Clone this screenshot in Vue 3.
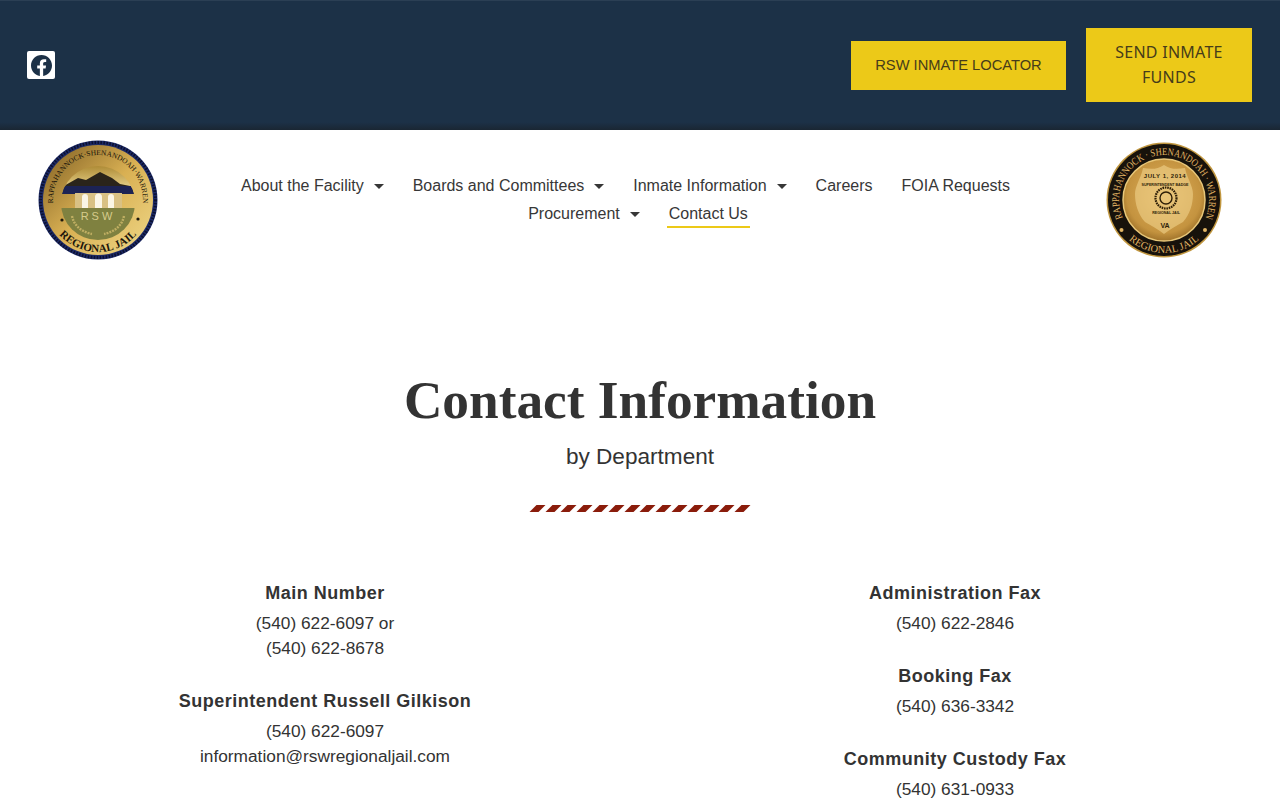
<template>
  <div class="page">
    <header class="topbar">
      <a class="fb" href="#" aria-label="Facebook">
        <svg viewBox="0 0 24 24" width="21" height="21">
          <path fill="#1c3147" d="M24 12.07C24 5.4 18.63 0 12 0S0 5.4 0 12.07c0 6.03 4.39 11.02 10.13 11.93v-8.44H7.08v-3.49h3.05V9.41c0-3.02 1.79-4.69 4.53-4.69 1.31 0 2.69.24 2.69.24v2.97h-1.51c-1.49 0-1.96.93-1.96 1.89v2.25h3.33l-.53 3.49h-2.8V24C19.61 23.09 24 18.1 24 12.07z"/>
        </svg>
      </a>
      <div class="top-buttons">
        <a class="btn btn-locator" href="#">RSW INMATE LOCATOR</a>
        <a class="btn btn-funds" href="#">SEND INMATE FUNDS</a>
      </div>
    </header>

    <div class="masthead">
      <div class="seal-left">
        <svg viewBox="0 0 120 120" width="120" height="120">
          <defs>
            <linearGradient id="goldA" x1="0" y1="0" x2="1" y2="1">
              <stop offset="0" stop-color="#7d5d22" />
              <stop offset="0.5" stop-color="#d9b053" />
              <stop offset="1" stop-color="#f0d98a" />
            </linearGradient>
            <linearGradient id="goldSky" x1="0" y1="0" x2="0" y2="1">
              <stop offset="0" stop-color="#a9852f" />
              <stop offset="1" stop-color="#f6e4a0" />
            </linearGradient>
            <path id="arcTopA" d="M60 105 A45 45 0 1 1 60.01 105" />
            <path id="arcBottomA" d="M60 8 A52 52 0 1 0 60.01 8" />
            <clipPath id="innerA"><circle cx="60" cy="63" r="37" /></clipPath>
          </defs>
          <circle cx="60" cy="60" r="59.5" fill="#1d2a66" />
          <circle cx="60" cy="60" r="57.5" fill="none" stroke="#0b1030" stroke-width="3" stroke-dasharray="1.5 1.5" />
          <circle cx="60" cy="60" r="55" fill="url(#goldA)" />
          <text class="seal-text" font-size="7.4" fill="#15110a"><textPath href="#arcTopA" startOffset="50%" text-anchor="middle">RAPPAHANNOCK·SHENANDOAH·WARREN</textPath></text>
          <text class="seal-text" font-size="11" font-weight="700" fill="#1d170c"><textPath href="#arcBottomA" startOffset="50%" text-anchor="middle">REGIONAL JAIL</textPath></text>
          <g clip-path="url(#innerA)">
            <rect x="20" y="24" width="80" height="30" fill="url(#goldSky)" />
            <path d="M24 47 L40 38 L48 40 L62 32 L74 38 L82 44 L92 46 L98 54 H24 Z" fill="#2a241a" />
            <rect x="24" y="46" width="72" height="8" fill="#1c2354" />
            <rect x="37" y="53" width="47" height="15" fill="#d9c184" />
            <path d="M44 68 V57 a3 3 0 0 1 6 0 V68 Z M57 68 V57 a3.5 3.5 0 0 1 7 0 V68 Z M70 68 V57 a3 3 0 0 1 6 0 V68 Z" fill="#fbf6e6" />
            <rect x="20" y="68" width="80" height="34" fill="#7f8140" />
            <text x="60" y="80" text-anchor="middle" class="seal-rsw">RSW</text>
            <path d="M34 76 C36 86 44 92 54 94 M86 76 C84 86 76 92 66 94" fill="none" stroke="#bfae62" stroke-width="2.4" stroke-dasharray="2 1" />
          </g>
          <circle cx="24" cy="80" r="1.6" fill="#1d170c" />
          <circle cx="100" cy="79" r="1.6" fill="#1d170c" />
        </svg>
      </div>

      <nav class="nav">
        <a v-for="item in navItems" :key="item.label" class="nav-link" :class="{ active: item.active }" href="#">
          {{ item.label }}
          <i v-if="item.caret" class="caret"></i>
        </a>
      </nav>

      <div class="seal-right">
        <svg viewBox="0 0 116 116" width="116" height="116">
          <defs>
            <radialGradient id="goldB" cx="0.5" cy="0.45" r="0.6">
              <stop offset="0" stop-color="#e0b25e" />
              <stop offset="0.75" stop-color="#c4933f" />
              <stop offset="1" stop-color="#8f6421" />
            </radialGradient>
            <path id="arcTopB" d="M58 103 A45 45 0 1 1 58.01 103" />
            <path id="arcBottomB" d="M58 5 A53 53 0 1 0 58.01 5" />
          </defs>
          <circle cx="58" cy="58" r="57.5" fill="#c0963f" />
          <circle cx="58" cy="58" r="56" fill="#17120b" />
          <circle cx="58" cy="58" r="41" fill="url(#goldB)" stroke="#e8c779" stroke-width="1.5" />
          <text class="seal-text" font-size="10.4" fill="#e1b565"><textPath href="#arcTopB" startOffset="50%" text-anchor="middle" textLength="178" lengthAdjust="spacingAndGlyphs">RAPPAHANNOCK · SHENANDOAH · WARREN</textPath></text>
          <text class="seal-text" font-size="10.4" fill="#e1b565"><textPath href="#arcBottomB" startOffset="50%" text-anchor="middle">REGIONAL JAIL</textPath></text>
          <path d="M58 23 C65 28 72 27 79 26 C81 36 87 44 87 52 C87 62 84 72 77 80 C70 84 63 88 58 92 C53 88 46 84 39 80 C32 72 29 62 29 52 C29 44 35 36 37 26 C44 27 51 28 58 23 Z" fill="#f0d28a" opacity="0.6" />
          <text x="59" y="36" text-anchor="middle" class="badge-text">JULY 1, 2014</text>
          <text x="59" y="44" text-anchor="middle" class="badge-small">SUPERINTENDENT BADGE</text>
          <circle cx="60" cy="56" r="10.5" fill="none" stroke="#2e1f08" stroke-width="2.2" stroke-dasharray="1.6 0.8" />
          <circle cx="60" cy="56" r="6" fill="none" stroke="#2e1f08" stroke-width="1.4" />
          <text x="60" y="72" text-anchor="middle" class="badge-small">REGIONAL JAIL</text>
          <text x="59" y="86" text-anchor="middle" class="badge-va">VA</text>
          <circle cx="15.5" cy="88" r="2" fill="#e1b565" />
          <circle cx="99" cy="88" r="2" fill="#e1b565" />
        </svg>
      </div>
    </div>

    <main class="content">
      <h1 class="title">Contact Information</h1>
      <p class="subtitle">by Department</p>
      <div class="divider">
        <span v-for="n in 14" :key="n" class="stripe"></span>
      </div>

      <div class="columns">
        <div v-for="(column, i) in columns" :key="i" class="column">
          <section v-for="block in column" :key="block.title" class="block">
            <h2>{{ block.title }}</h2>
            <p v-for="line in block.lines" :key="line">{{ line }}</p>
          </section>
        </div>
      </div>
    </main>
  </div>
</template>

<script setup>
const navItems = [
  { label: "About the Facility", caret: true },
  { label: "Boards and Committees", caret: true },
  { label: "Inmate Information", caret: true },
  { label: "Careers" },
  { label: "FOIA Requests" },
  { label: "Procurement", caret: true },
  { label: "Contact Us", active: true },
];

const columns = [
  [
    { title: "Main Number", lines: ["(540) 622-6097 or", "(540) 622-8678"] },
    {
      title: "Superintendent Russell Gilkison",
      lines: ["(540) 622-6097", "information@rswregionaljail.com"],
    },
  ],
  [
    { title: "Administration Fax", lines: ["(540) 622-2846"] },
    { title: "Booking Fax", lines: ["(540) 636-3342"] },
    { title: "Community Custody Fax", lines: ["(540) 631-0933"] },
  ],
];
</script>

<style>
html,
body {
  margin: 0;
  background: #fff;
  overflow-x: hidden;
}
</style>

<style scoped>
.page {
  font-family: "Liberation Sans", Arial, sans-serif;
  color: #333;
}

.topbar {
  box-sizing: border-box;
  height: 130px;
  display: flex;
  align-items: center;
  justify-content: space-between;
  padding: 0 28px 0 27px;
  background: linear-gradient(#1c3147 94%, #1a2633);
  box-shadow: inset 0 1px 0 #2b3f54;
}

.fb {
  width: 28px;
  height: 28px;
  background: #fff;
  border-radius: 2px;
  display: flex;
  align-items: center;
  justify-content: center;
}

.top-buttons {
  display: flex;
  align-items: center;
  gap: 20px;
}

.btn {
  box-sizing: border-box;
  display: block;
  background: #ecc918;
  color: #463c1a;
  text-decoration: none;
  text-align: center;
}

.btn-locator {
  width: 215px;
  height: 49px;
  line-height: 48px;
  font-size: 14.7px;
}

.btn-funds {
  width: 166px;
  height: 74px;
  padding: 12px 20px;
  font-family: "Noto Sans", sans-serif;
  font-size: 16px;
  letter-spacing: 0.25px;
  line-height: 25px;
}

.masthead {
  display: flex;
  align-items: flex-start;
  height: 140px;
}

.seal-left {
  width: 196px;
  display: flex;
  justify-content: center;
  padding-top: 10px;
}

.seal-right {
  box-sizing: border-box;
  width: 225px;
  display: flex;
  justify-content: center;
  padding: 12px 7px 0 0;
}

.seal-left svg,
.seal-right svg {
  display: block;
}

.seal-text {
  font-family: "Liberation Serif", serif;
}

.seal-rsw {
  font-family: "Liberation Sans", sans-serif;
  font-size: 11px;
  letter-spacing: 3px;
  fill: #d7cc8c;
}

.badge-text {
  font-family: "Liberation Sans", sans-serif;
  font-size: 6px;
  font-weight: 700;
  letter-spacing: 0.5px;
  fill: #2e1f08;
}

.badge-small {
  font-family: "Liberation Sans", sans-serif;
  font-size: 3.6px;
  font-weight: 700;
  fill: #2e1f08;
}

.badge-va {
  font-family: "Liberation Sans", sans-serif;
  font-size: 7px;
  font-weight: 700;
  fill: #2e1f08;
}

.nav {
  flex: 1;
  display: flex;
  flex-wrap: wrap;
  justify-content: center;
  align-content: flex-start;
  column-gap: 29px;
  padding-top: 42px;
}

.nav-link {
  display: block;
  height: 28px;
  line-height: 28px;
  font-size: 16px;
  color: #373737;
  text-decoration: none;
  position: relative;
}

.nav-link:nth-child(6) {
  margin-left: 25px;
}

.nav-link.active::after {
  content: "";
  position: absolute;
  left: -2px;
  right: -2px;
  bottom: 0;
  height: 2px;
  background: #ecc918;
}

.caret {
  display: inline-block;
  width: 0;
  height: 0;
  margin-left: 5.5px;
  margin-bottom: 1px;
  vertical-align: middle;
  border-left: 5px solid transparent;
  border-right: 5px solid transparent;
  border-top: 5px solid #373737;
}

.content {
  padding: 0 10px;
  text-align: center;
}

.title {
  margin: 0;
  padding-top: 100px;
  font-family: "Liberation Serif", serif;
  font-size: 53.3px;
  font-weight: 700;
  line-height: 62px;
  color: #333;
}

.subtitle {
  margin: 10px 0 0;
  font-size: 22.6px;
  line-height: 30px;
  color: #333;
}

.divider {
  display: flex;
  justify-content: center;
  gap: 6.8px;
  margin-top: 33px;
  height: 7px;
}

.stripe {
  width: 9px;
  background: #8a1c0b;
  transform: skewX(-45deg);
}

.columns {
  display: grid;
  grid-template-columns: 1fr 1fr;
  margin-top: 69px;
}

.block {
  margin-bottom: 28px;
}

.block h2 {
  margin: 0 0 5px;
  font-size: 18px;
  line-height: 25px;
  font-weight: 700;
  letter-spacing: 0.5px;
  color: #333;
}

.block p {
  margin: 0;
  font-size: 17.3px;
  line-height: 25px;
  color: #333;
}
</style>
